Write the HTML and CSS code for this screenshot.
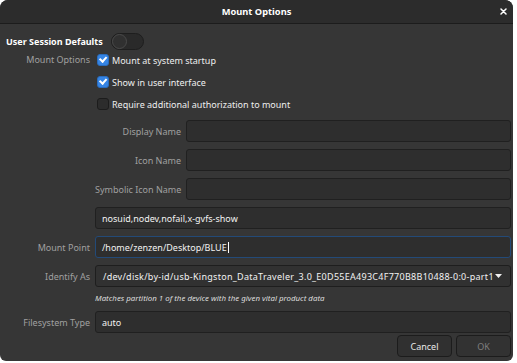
FILE: index.html
```html
<!DOCTYPE html>
<html lang="en">
<head>
  <meta charset="UTF-8" />
  <meta name="viewport" content="width=device-width, initial-scale=1.0"/>
  <title>Mount Options</title>
  <link rel="stylesheet" href="styles.css">
</head>
<body>

  <div class="window">
    <div class="titlebar">
      <span class="title">Mount Options</span>
      <span class="close">
        <svg width="7" height="7" viewBox="0 0 7 7"><path d="M1 1 L6 6 M6 1 L1 6" stroke="#fff" stroke-width="1.5" stroke-linecap="round"/></svg>
      </span>
    </div>

    <div class="content">
      <div class="defaults-row">
        <span class="section">User Session Defaults</span>
        <span class="switch"><span class="knob"></span></span>
      </div>

      <div class="form">
        <div class="label top">Mount Options</div>
        <div class="checks">
          <div class="check-row"><span class="check on"></span>Mount at system startup</div>
          <div class="check-row"><span class="check on"></span>Show in user interface</div>
          <div class="check-row"><span class="check"></span>Require additional authorization to mount</div>
        </div>

        <div></div>
        <div class="inner">
          <div class="label">Display Name</div>
          <div class="entry"></div>
          <div class="label">Icon Name</div>
          <div class="entry"></div>
          <div class="label">Symbolic Icon Name</div>
          <div class="entry"></div>
        </div>

        <div></div>
        <div class="entry">nosuid,nodev,nofail,x-gvfs-show</div>

        <div class="label">Mount Point</div>
        <div class="entry focus">/home/zenzen/Desktop/BLUE<span class="caret"></span></div>

        <div class="label">Identify As</div>
        <div class="combo">
          <span class="combo-text">/dev/disk/by-id/usb-Kingston_DataTraveler_3.0_E0D55EA493C4F770B8B10488-0:0-part1</span>
          <svg width="7" height="4" viewBox="0 0 7 4"><path d="M0 0 L7 0 L3.5 4 Z" fill="#f0f0f0"/></svg>
        </div>

        <div></div>
        <div class="hint">Matches partition 1 of the device with the given vital product data</div>

        <div class="label">Filesystem Type</div>
        <div class="entry">auto</div>
      </div>

      <div class="buttons">
        <div class="button">Cancel</div>
        <div class="button disabled">OK</div>
      </div>
    </div>
  </div>

</body>
</html>
```

FILE: styles.css
```css
body {
  margin: 0;
  background-color: #ffffff;
  font-family: "Noto Sans", sans-serif;
  font-size: 9px;
  color: #eeeeee;
}

.window {
  width: 513px;
  height: 361px;
  background-color: #363636;
  border-radius: 8px 8px 6px 6px;
  overflow: hidden;
  display: flex;
  flex-direction: column;
}

.titlebar {
  height: 23px;
  background-color: #2c2c2c;
  border-bottom: 1px solid #1c1c1c;
  display: flex;
  align-items: center;
  justify-content: center;
  position: relative;
}

.title {
  font-weight: bold;
  font-size: 9.3px;
  color: #ffffff;
}

.close {
  position: absolute;
  right: 6px;
  top: 8px;
  display: flex;
}

.content {
  flex: 1;
  padding: 9px 2px 4px 6px;
  display: flex;
  flex-direction: column;
}

.defaults-row {
  display: flex;
  align-items: center;
  gap: 8px;
  height: 17px;
  margin-bottom: 1px;
}

.section {
  font-weight: bold;
  color: #ffffff;
}

.switch {
  width: 31px;
  height: 15px;
  border: 1px solid #1e1e1e;
  border-radius: 9px;
  background-color: #2a2a2a;
  display: flex;
  align-items: center;
}

.knob {
  width: 13px;
  height: 13px;
  border-radius: 50%;
  border: 1px solid #4a4a4a;
  background-color: #303030;
}

.form {
  display: grid;
  grid-template-columns: 84px 1fr;
  column-gap: 5px;
  row-gap: 7px;
  align-items: center;
}

.label {
  text-align: right;
  color: #a0a0a0;
  white-space: nowrap;
}

.label.top {
  align-self: start;
  line-height: 18px;
}

.checks {
  display: flex;
  flex-direction: column;
  gap: 4px;
  align-self: start;
}

.check-row {
  height: 18px;
  display: flex;
  align-items: center;
  gap: 3px;
  padding-left: 2px;
}

.check {
  width: 10px;
  height: 10px;
  border: 1px solid #1c1c1c;
  border-radius: 3px;
  background-color: #2c2c2c;
  position: relative;
}

.check.on {
  background-color: #3584e4;
  border-color: #2a6cbd;
}

.check.on::after {
  content: "";
  position: absolute;
  left: 2px;
  top: 1px;
  width: 5px;
  height: 3px;
  border-left: 2px solid #ffffff;
  border-bottom: 2px solid #ffffff;
  transform: rotate(-48deg);
  transform-origin: 50% 60%;
}

.inner {
  display: grid;
  grid-template-columns: 86px 1fr;
  column-gap: 5px;
  row-gap: 7px;
  align-items: center;
}

.entry {
  height: 20px;
  border: 1px solid #202020;
  border-radius: 3px;
  background-color: #2e2e2e;
  display: flex;
  align-items: center;
  padding: 0 6px;
  color: #f2f2f2;
  white-space: nowrap;
}

.entry.focus {
  border-color: #234a78;
}

.caret {
  width: 1px;
  height: 11px;
  background-color: #ffffff;
  margin-left: 1px;
}

.combo {
  height: 20px;
  border: 1px solid #1e1e1e;
  border-radius: 3px;
  background-color: #313131;
  display: flex;
  align-items: center;
  justify-content: space-between;
  padding: 0 8px 0 7px;
  color: #f2f2f2;
  white-space: nowrap;
}

.combo-text {
  letter-spacing: 0.28px;
}

.hint {
  font-style: italic;
  font-size: 7.9px;
  color: #dddddd;
  height: 11px;
  line-height: 11px;
  margin-top: -1px;
}

.buttons {
  display: flex;
  justify-content: flex-end;
  gap: 4px;
  margin-top: 2px;
}

.button {
  width: 53px;
  height: 20px;
  border: 1px solid #1c1c1c;
  border-radius: 4px;
  background-color: #303030;
  display: flex;
  align-items: center;
  justify-content: center;
  color: #e8e8e8;
}

.button.disabled {
  color: #7e7e7e;
  background-color: #323232;
}
```
